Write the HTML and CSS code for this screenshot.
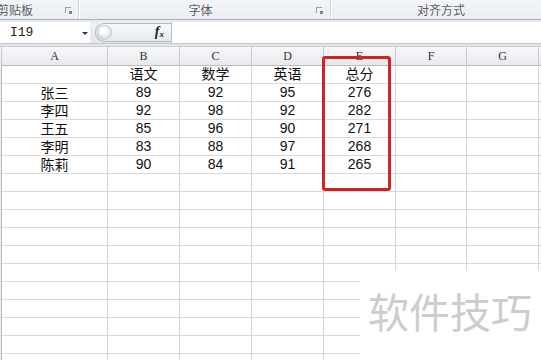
FILE: index.html
```html
<!DOCTYPE html>
<html lang="zh-CN">
<head>
<meta charset="utf-8">
<title>Excel</title>
<link rel="stylesheet" href="styles.css">
</head>
<body>
<div class="app">
  <div class="ribbon">
    <div class="group g1"><span class="glabel">剪贴板</span><span class="launch"></span></div>
    <div class="group g2"><span class="glabel">字体</span><span class="launch"></span></div>
    <div class="group g3"><span class="glabel">对齐方式</span></div>
  </div>
  <div class="rb-sep"></div>
  <div class="fbar">
    <div class="namebox"><span class="nm">I19</span><span class="tri"></span></div>
    <div class="fxarea">
      <div class="pill"><span class="knob"></span><span class="fx">f<sub>x</sub></span></div>
    </div>
    <div class="finput"></div>
  </div>
  <div class="strip"></div>
  <div class="sheet">
    <div class="row head">
      <div class="c stub"></div><div class="c">A</div><div class="c">B</div><div class="c">C</div><div class="c">D</div><div class="c">E</div><div class="c">F</div><div class="c">G</div><div class="c last"></div>
    </div>
    <div class="row first">
      <div class="c stub"></div><div class="c"></div><div class="c zh">语文</div><div class="c zh">数学</div><div class="c zh">英语</div><div class="c zh">总分</div><div class="c"></div><div class="c"></div><div class="c last"></div>
    </div>
    <div class="row">
      <div class="c stub"></div><div class="c zh">张三</div><div class="c">89</div><div class="c">92</div><div class="c">95</div><div class="c">276</div><div class="c"></div><div class="c"></div><div class="c last"></div>
    </div>
    <div class="row">
      <div class="c stub"></div><div class="c zh">李四</div><div class="c">92</div><div class="c">98</div><div class="c">92</div><div class="c">282</div><div class="c"></div><div class="c"></div><div class="c last"></div>
    </div>
    <div class="row">
      <div class="c stub"></div><div class="c zh">王五</div><div class="c">85</div><div class="c">96</div><div class="c">90</div><div class="c">271</div><div class="c"></div><div class="c"></div><div class="c last"></div>
    </div>
    <div class="row">
      <div class="c stub"></div><div class="c zh">李明</div><div class="c">83</div><div class="c">88</div><div class="c">97</div><div class="c">268</div><div class="c"></div><div class="c"></div><div class="c last"></div>
    </div>
    <div class="row">
      <div class="c stub"></div><div class="c zh">陈莉</div><div class="c">90</div><div class="c">84</div><div class="c">91</div><div class="c">265</div><div class="c"></div><div class="c"></div><div class="c last"></div>
    </div>
    <div class="row"><div class="c stub"></div><div class="c"></div><div class="c"></div><div class="c"></div><div class="c"></div><div class="c"></div><div class="c"></div><div class="c"></div><div class="c last"></div></div>
    <div class="row"><div class="c stub"></div><div class="c"></div><div class="c"></div><div class="c"></div><div class="c"></div><div class="c"></div><div class="c"></div><div class="c"></div><div class="c last"></div></div>
    <div class="row"><div class="c stub"></div><div class="c"></div><div class="c"></div><div class="c"></div><div class="c"></div><div class="c"></div><div class="c"></div><div class="c"></div><div class="c last"></div></div>
    <div class="row"><div class="c stub"></div><div class="c"></div><div class="c"></div><div class="c"></div><div class="c"></div><div class="c"></div><div class="c"></div><div class="c"></div><div class="c last"></div></div>
    <div class="row"><div class="c stub"></div><div class="c"></div><div class="c"></div><div class="c"></div><div class="c"></div><div class="c"></div><div class="c"></div><div class="c"></div><div class="c last"></div></div>
    <div class="row"><div class="c stub"></div><div class="c"></div><div class="c"></div><div class="c"></div><div class="c"></div><div class="c"></div><div class="c"></div><div class="c"></div><div class="c last"></div></div>
    <div class="row"><div class="c stub"></div><div class="c"></div><div class="c"></div><div class="c"></div><div class="c"></div><div class="c"></div><div class="c"></div><div class="c"></div><div class="c last"></div></div>
    <div class="row"><div class="c stub"></div><div class="c"></div><div class="c"></div><div class="c"></div><div class="c"></div><div class="c"></div><div class="c"></div><div class="c"></div><div class="c last"></div></div>
    <div class="row"><div class="c stub"></div><div class="c"></div><div class="c"></div><div class="c"></div><div class="c"></div><div class="c"></div><div class="c"></div><div class="c"></div><div class="c last"></div></div>
    <div class="row"><div class="c stub"></div><div class="c"></div><div class="c"></div><div class="c"></div><div class="c"></div><div class="c"></div><div class="c"></div><div class="c"></div><div class="c last"></div></div>
    <div class="row"><div class="c stub"></div><div class="c"></div><div class="c"></div><div class="c"></div><div class="c"></div><div class="c"></div><div class="c"></div><div class="c"></div><div class="c last"></div></div>
    <div class="hilite"></div>
    <div class="watermark"><span class="wm-text">软件技巧</span></div>
  </div>
</div>
</body>
</html>
```

FILE: styles.css
```css
* { box-sizing: border-box; }
html, body { margin: 0; padding: 0; }
body {
  width: 541px;
  height: 360px;
  overflow: hidden;
  background: #ffffff;
  font-family: "Liberation Sans", Arial, "Noto Sans CJK SC", sans-serif;
}
.app { width: 541px; height: 360px; overflow: hidden; position: relative; }

/* ribbon group labels */
.ribbon {
  height: 19px;
  display: flex;
  background: linear-gradient(#f3f5f8, #e9edf2);
}
.group {
  position: relative;
  height: 19px;
  display: flex;
  align-items: center;
  border-right: 1px solid #d0d6de;
  box-shadow: 1px 0 0 #ffffff;
}
.g1 { width: 79px; }
.g2 { width: 252px; justify-content: center; }
.g3 { flex: 1; justify-content: center; border-right: none; box-shadow: none; }
.glabel {
  font-family: "Noto Sans CJK SC", sans-serif;
  font-size: 12px;
  color: #5b5e63;
  line-height: 19px;
}
.g1 .glabel { margin-left: -3px; }
.g2 .glabel { margin-left: -8px; }
.g3 .glabel { margin-left: 10px; }
.launch {
  position: absolute;
  right: 7px;
  top: 7px;
  width: 6px;
  height: 6px;
  border-top: 1px solid #9aa0a8;
  border-left: 1px solid #9aa0a8;
}
.launch::after {
  content: "";
  position: absolute;
  right: -1px;
  bottom: -1px;
  width: 3px;
  height: 3px;
  background: #7d838b;
}
.g2 .launch { right: 8px; }
.rb-sep { height: 1px; background: #a9b1bb; }

/* formula bar */
.fbar {
  height: 24px;
  display: flex;
  background: #e9ecf0;
  border-bottom: 1px solid #c3c8ce;
  padding-top: 1px;
  border-top: 1px solid #e4e8ed;
}
.namebox {
  width: 90px;
  background: #ffffff;
  display: flex;
  align-items: center;
  position: relative;
}
.nm {
  font-family: "Liberation Mono", "DejaVu Sans Mono", monospace;
  font-size: 13px;
  color: #222;
  margin-left: 10px;
}
.tri {
  position: absolute;
  left: 82px;
  top: 10px;
  width: 0; height: 0;
  border-left: 3px solid transparent;
  border-right: 3px solid transparent;
  border-top: 3px solid #333;
}
.fxarea {
  width: 81px;
  display: flex;
  align-items: center;
  background: linear-gradient(#eef0f3, #e4e7eb);
}
.pill {
  margin-left: 5px;
  width: 76px;
  height: 19px;
  border: 1px solid #b4bac2;
  border-right: none;
  border-radius: 10px 0 0 10px;
  background: linear-gradient(#f7f8fa, #e6e9ed);
  display: flex;
  align-items: center;
  justify-content: space-between;
}
.knob {
  width: 15px;
  height: 15px;
  margin-left: 1px;
  border-radius: 50%;
  border: 1px solid #c0c5cc;
  background: radial-gradient(circle at 45% 35%, #ffffff 0 3px, #e3e6ea 6px, #d4d8de);
}
.fx {
  font-family: "Liberation Serif", serif;
  font-style: italic;
  font-weight: bold;
  font-size: 14px;
  color: #222;
  margin-right: 7px;
  line-height: 14px;
}
.fx sub { font-size: 9px; vertical-align: -1px; }
.finput {
  flex: 1;
  background: #ffffff;
  border-left: 1px solid #b9bec5;
}
.strip { background: #e3e6ea; border-bottom: 1px solid #c9cdd3; height: 3px; }

/* sheet */
.sheet { position: relative; }
.row {
  display: grid;
  grid-template-columns: 2px 106px 72px 72px 72px 72px 71px 72px 1fr;
  height: 18px;
}
.row.first { height: 19px; }
.c {
  border-right: 1px solid #d6d6d6;
  border-bottom: 1px solid #dadada;
  text-align: center;
  font-size: 14px;
  color: #111;
  line-height: 17px;
  white-space: nowrap;
}
.c.last { border-right: none; }
.c.stub { background: #eceef1; border-right: 1px solid #b8bcc2; }
.zh { font-family: "Noto Sans CJK SC", sans-serif; font-size: 14px; line-height: 17px; }
.head .c {
  background: linear-gradient(#f7f8fa, #e7e9ec);
  border-right: 1px solid #c6cace;
  border-bottom: 1px solid #b9bdc3;
  font-family: "Liberation Serif", serif;
  font-size: 12px;
  color: #333;
  line-height: 18px;
}
.head .c.last { border-right: none; }

.hilite {
  position: absolute;
  left: 322px;
  top: 9px;
  width: 69px;
  height: 135px;
  border: 3px solid #d3221f;
  border-radius: 3px;
}
.watermark {
  position: absolute;
  left: 360px;
  top: 223px;
  right: 0;
  bottom: 0;
  background: #ffffff;
}
.wm-text {
  position: absolute;
  left: 8px;
  top: 15px;
  font-family: "Noto Sans CJK SC", sans-serif;
  font-size: 41px;
  line-height: 50px;
  color: #cdcdcd;
  white-space: nowrap;
}
```
